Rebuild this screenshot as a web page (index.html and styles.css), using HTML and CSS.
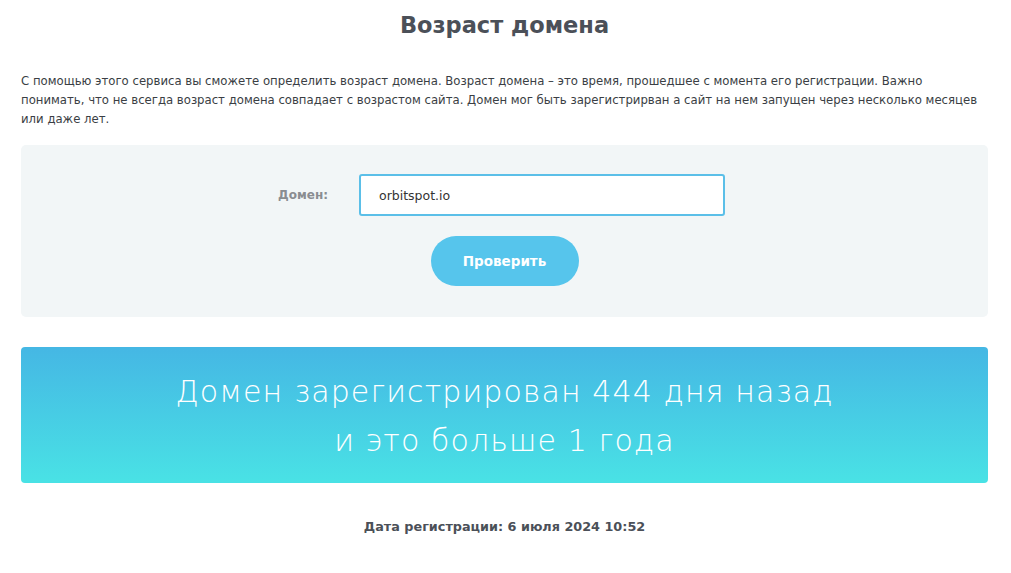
FILE: index.html
```html
<!DOCTYPE html>
<html>

<head>
    <meta charset="utf-8">
    <title>Возраст домена</title>
    <link rel="stylesheet" href="styles.css">
</head>

<body>
    <section id="main">
        <h1 class="page-title">Возраст домена</h1>
        <p class="intro">С помощью этого сервиса вы сможете определить возраст домена. Возраст домена – это время, прошедшее с момента его регистрации. Важно<br>
        понимать, что не всегда возраст домена совпадает с возрастом сайта. Домен мог быть зарегистрирван а сайт на нем запущен через несколько месяцев или даже лет.</p>
        <form class="check-form">
            <div class="form-row">
                <label class="form-label" for="domain">Домен:</label>
                <input class="form-input" type="text" id="domain" value="orbitspot.io" spellcheck="true">
            </div>
            <button class="btn-check" type="button">Проверить</button>
        </form>
        <div class="result">
            <p>Домен зарегистрирован 444 дня назад</p>
            <p>и это больше 1 года</p>
        </div>
        <p class="reg-date">Дата регистрации: 6 июля 2024 10:52</p>
    </section>
</body>

</html>
```

FILE: styles.css
```css
body {
    font-family: 'DejaVu Sans', Verdana, sans-serif;
    font-size: 12px;
    color: #3a3e44;
    margin: 0;
    background: #fff;
}

#main {
    padding: 0 23px 0 21px;
}

.page-title {
    margin: 0;
    padding-top: 10px;
    height: 40px;
    font-size: 22.5px;
    line-height: 30px;
    text-align: center;
    color: #4b5058;
}

.intro {
    margin: 22px 0 0;
    font-size: 11.7px;
    line-height: 19px;
}

.check-form {
    margin-top: 16px;
    background: #f2f6f7;
    border-radius: 5px;
    height: 172px;
    box-sizing: border-box;
    padding-top: 29px;
    display: flex;
    flex-direction: column;
    align-items: center;
}

.form-row {
    display: flex;
    align-items: center;
    gap: 31px;
    margin-left: -6px;
}

.form-label {
    color: #8a8d91;
    font-weight: bold;
    font-size: 12px;
}

.form-input {
    width: 366px;
    height: 42px;
    box-sizing: border-box;
    border: 2px solid #5bbfe8;
    border-radius: 3px;
    padding: 0 18px;
    font-family: inherit;
    font-size: 12.5px;
    color: #333;
    outline: none;
}

.btn-check {
    margin-top: 20px;
    width: 148px;
    height: 50px;
    border: 0;
    border-radius: 25px;
    background: #56c5ec;
    color: #fff;
    font-family: inherit;
    font-weight: bold;
    font-size: 13.5px;
}

.result {
    margin-top: 30px;
    height: 136px;
    border-radius: 4px;
    background: linear-gradient(to bottom, #45b7e4, #49e2e5);
    color: #fff;
    text-align: center;
    font-size: 30px;
    font-weight: 200;
    letter-spacing: 1.1px;
    padding-top: 20px;
    box-sizing: border-box;
}

.result p {
    margin: 0;
    line-height: 49px;
}

.reg-date {
    margin: 36px 0 0;
    text-align: center;
    font-weight: bold;
    font-size: 12.8px;
    color: #4b5058;
}
```
